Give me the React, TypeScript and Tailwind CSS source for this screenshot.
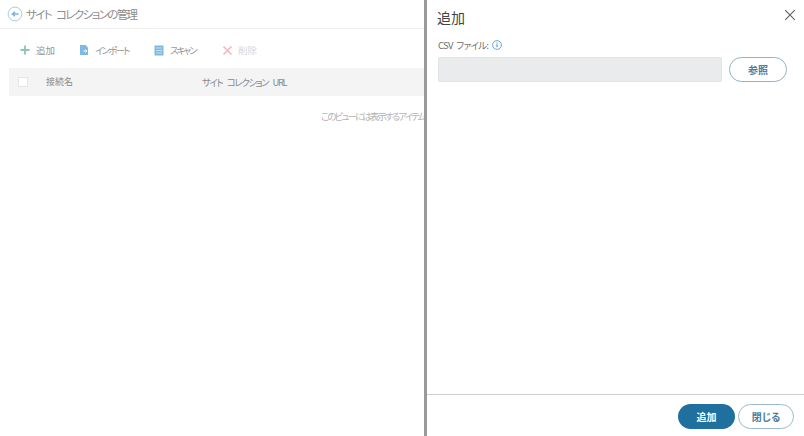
import React from "react";

function Tool({ icon, label, muted, className, textClass }: { icon: React.ReactNode; label: string; muted?: boolean; className: string; textClass: string }) {
  return (
    <div className={`flex items-center gap-[5px] ${className}`}>
      <span className="w-[12px] h-[14px] flex items-center justify-center">{icon}</span>
      <span className={`leading-[14px] whitespace-nowrap ${textClass} ${muted ? "text-[#d8d8d8]" : "text-[#969696]"}`}>{label}</span>
    </div>
  );
}

export default function App() {
  return (
    <div className="w-[804px] h-[436px] flex bg-white overflow-hidden [font-feature-settings:'palt'] font-['Noto_Sans_CJK_JP','Noto_Sans',sans-serif]">
      <div className="w-[424px] shrink-0 overflow-hidden flex flex-col">
        <div className="h-[29px] shrink-0 flex items-center pl-[7px] border-b border-[#f1f1f1] w-full">
          <svg width="16" height="16" viewBox="0 0 16 16" fill="none" className="mr-[3px]">
            <circle cx="8" cy="8" r="6.9" stroke="#a9cde6" strokeWidth="1" />
            <path d="M11.6 8H6.2M8 5.8 5.4 8 8 10.2" stroke="#7fb3d8" strokeWidth="1.5" />
          </svg>
          <span className="text-[11.5px] tracking-[-1.6px] [word-spacing:4px] leading-[16px] text-[#8c8c8c] whitespace-nowrap">サイト コレクションの管理</span>
        </div>
        <div className="h-[39px] shrink-0 flex items-center pl-[19px] pt-[3px]">
          <Tool className="w-[59px]" textClass="text-[9.5px]" label="追加" icon={
            <svg width="12" height="12" viewBox="0 0 12 12"><path d="M6 1.5v9M1.5 6h9" stroke="#8cc4b8" strokeWidth="1.8" /></svg>
          } />
          <Tool className="w-[75px]" textClass="text-[9.5px] tracking-[-1.8px]" label="インポート" icon={
            <svg width="10" height="12" viewBox="0 0 10 12"><path d="M1 1h5.5L9 3.5V11H1z" fill="#7db9e0" /><path d="M4.5 7h3.5M6.5 5.5 8 7 6.5 8.5" stroke="#fff" strokeWidth="1" fill="none" /></svg>
          } />
          <Tool className="w-[68px]" textClass="text-[9.5px] tracking-[-2px]" label="スキャン" icon={
            <svg width="10" height="11" viewBox="0 0 10 11"><rect x="0.5" y="0.5" width="9" height="10" fill="#7db9e0" /><path d="M2 3h6M2 5.5h6M2 8h6" stroke="#c4e0f2" strokeWidth="1" /></svg>
          } />
          <Tool className="w-[60px]" textClass="text-[9.5px]" label="削除" muted icon={
            <svg width="11" height="11" viewBox="0 0 11 11"><path d="M1.5 1.5l8 8M9.5 1.5l-8 8" stroke="#f0b4bc" strokeWidth="1.5" /></svg>
          } />
        </div>
        <div className="ml-[9px] h-[28px] shrink-0 bg-[#f4f4f4] flex items-center">
          <span className="ml-[9px] w-[10px] h-[10px] bg-white border border-[#e6e6e6] shrink-0" />
          <span className="ml-[18px] w-[156px] text-[9px] leading-[14px] text-[#8a8a8a]">接続名</span>
          <span className="text-[9.5px] tracking-[-1.5px] [word-spacing:4px] leading-[14px] text-[#8a8a8a] whitespace-nowrap">サイト コレクション URL</span>
        </div>
        <div className="pl-[321px] pt-[13px] text-[9.5px] tracking-[-1.9px] leading-[14px] text-[#b4b4b4] whitespace-nowrap">このビューには表示するアイテムがありません</div>
      </div>
      <div className="w-[380px] shrink-0 flex flex-col border-l-[3px] border-[#9a9a9a] bg-white">
        <div className="flex-1 pl-[10px] pr-[17px]">
          <div className="flex items-center justify-between h-[35px]">
            <span className="text-[14px] leading-[20px] text-[#444444] -mt-[1px]">追加</span>
            <svg width="12" height="12" viewBox="0 0 12 12" className="mr-[-9px] mt-[-5px]"><path d="M1.2 1.2l9.6 9.6M10.8 1.2l-9.6 9.6" stroke="#5f5f5f" strokeWidth="1.1" /></svg>
          </div>
          <div className="mt-[3px] flex items-center h-[14px] pl-[1px]">
            <span className="text-[9.5px] tracking-[-0.7px] [word-spacing:2px] leading-[14px] text-[#6e6e6e]">CSV ファイル:</span>
            <svg width="10" height="10" viewBox="0 0 10 10" className="ml-[4px]"><circle cx="5" cy="5" r="4.4" fill="none" stroke="#5a9fd4" strokeWidth="0.9" /><path d="M5 4.2v3M5 2.4v1" stroke="#3f87c2" strokeWidth="1" /></svg>
          </div>
          <div className="mt-[5px] flex items-center">
            <div className="ml-[1px] w-[284px] h-[25px] bg-[#e9ebec] border border-[#e0e2e3] rounded-[2px]" />
            <button className="ml-[7px] w-[58px] h-[25px] rounded-full border border-[#8fb3c9] bg-white text-[10px] font-bold text-[#4d7d9c]">参照</button>
          </div>
        </div>
        <div className="h-[42px] shrink-0 border-t border-[#cfcfcf] flex items-start justify-end pr-[10px] pt-[9px] gap-[3px]">
          <button className="w-[57px] h-[25px] rounded-full bg-[#1f6f9f] text-white text-[10px] font-bold">追加</button>
          <button className="w-[56px] h-[25px] rounded-full border border-[#9dbbcf] bg-white text-[10px] font-bold text-[#4d7d9c]">閉じる</button>
        </div>
      </div>
    </div>
  );
}
